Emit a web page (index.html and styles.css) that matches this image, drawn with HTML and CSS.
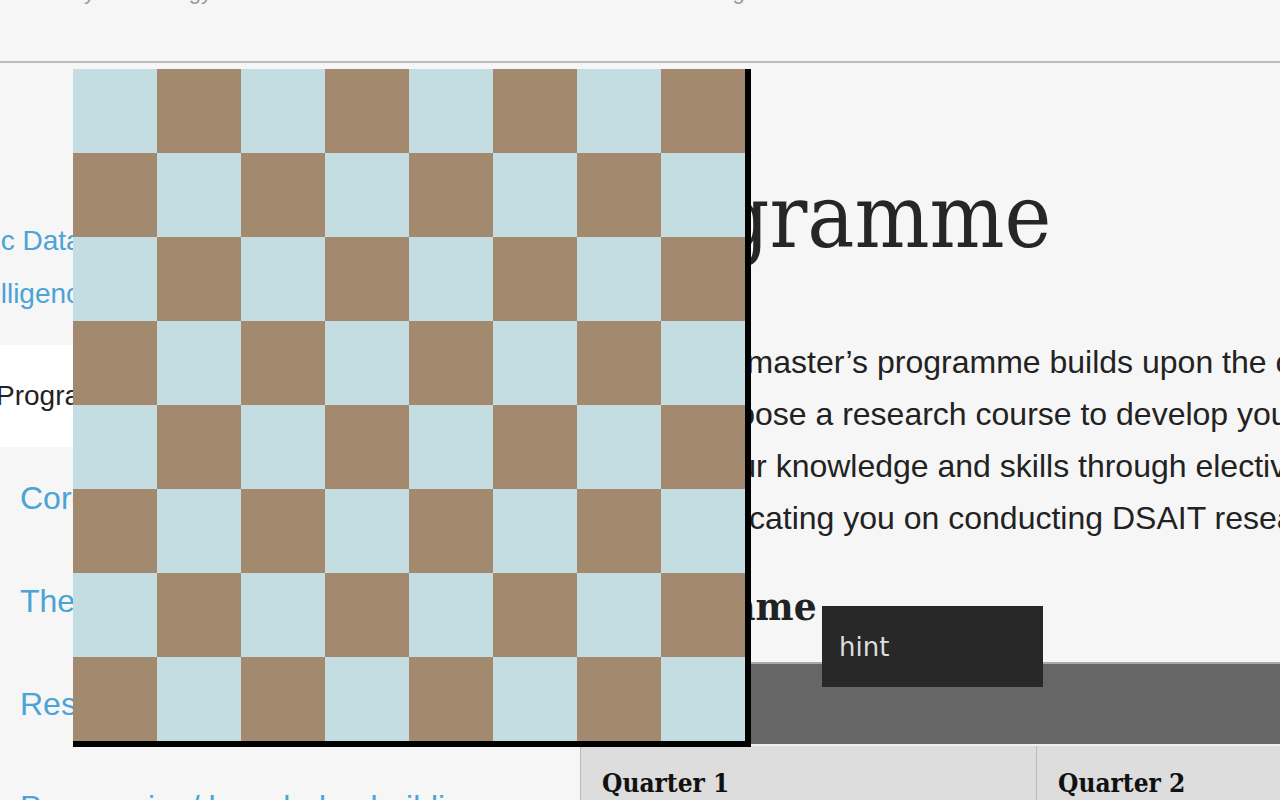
FILE: index.html
```html
<!DOCTYPE html>
<html lang="en">
<head>
<meta charset="utf-8">
<title>Programme</title>
<link rel="stylesheet" href="styles.css">
</head>
<body>
<div class="page">
  <header class="site-header">
    <p class="tagline">Faculty Technology Mathematics and Electrical Science the Built Teaching</p>
  </header>
  <div class="layout">
    <nav class="sidenav">
      <ul class="nav-list">
        <li><a class="nav-link nav-top nav-title" href="#">Civic Data Science and<br>Intelligence</a></li>
        <li><a class="nav-link nav-top is-active" href="#">Programme</a></li>
        <li><a class="nav-link nav-sub" href="#">Core courses</a></li>
        <li><a class="nav-link nav-sub" href="#">The thesis</a></li>
        <li><a class="nav-link nav-sub" href="#">Research courses</a></li>
        <li><a class="nav-link nav-sub" href="#">Progression/ knowledge building</a></li>
      </ul>
    </nav>
    <main class="content">
      <h1 class="page-title">Programme</h1>
      <p class="intro">The DSAIT master’s programme builds upon the core courses of the first year.<br>You can choose a research course to develop your own research skills.<br>Improve your knowledge and skills through electives in the second year,<br>thereby educating you on conducting DSAIT research independently.</p>
      <h2 class="section-title">Programme</h2>
      <table class="schedule">
        <colgroup><col class="col-q1"><col class="col-q2"></colgroup>
        <thead>
          <tr class="schedule-band"><th colspan="2">Year 1</th></tr>
          <tr class="schedule-quarters"><th>Quarter 1</th><th>Quarter 2</th></tr>
        </thead>
      </table>
    </main>
  </div>
  <div class="board" aria-label="chessboard"></div>
  <div class="hint">hint</div>
</div>
</body>
</html>
```

FILE: styles.css
```css
html, body {
  margin: 0;
  padding: 0;
  background: #f6f6f6;
}

.page {
  position: relative;
  width: 1280px;
  height: 800px;
  overflow: hidden;
  background: #f6f6f6;
  font-family: "Liberation Sans", Arial, sans-serif;
  color: #222;
}

.site-header {
  height: 61px;
  border-bottom: 2px solid #bbb;
  overflow: hidden;
}

.tagline {
  margin: -19px 0 0 0;
  padding-left: 24px;
  font-size: 22px;
  line-height: 22px;
  color: #999;
  white-space: nowrap;
}

.layout {
  display: grid;
  grid-template-columns: 560px 1000px;
  column-gap: 20px;
}

.sidenav {
  padding-top: 126px;
}

.nav-list {
  list-style: none;
  margin: 0;
  padding: 0;
  display: flex;
  flex-direction: column;
  gap: 1px;
}

.nav-link {
  display: block;
  padding: 25px 0;
  font-size: 28px;
  line-height: 52px;
  color: #4ba3d6;
  text-decoration: none;
  white-space: nowrap;
}

.nav-top {
  padding-left: 0;
  text-indent: -4px;
}

.nav-title {
  margin-left: -46px;
  text-indent: 0;
  line-height: 53px;
  padding-bottom: 24px;
}

.nav-sub {
  padding: 24px 0 26px 20px;
  font-size: 32px;
}

.nav-link.is-active {
  background: #fff;
  color: #222;
}

.content {
  min-width: 0;
}

.page-title {
  margin: 104px 0 0 0;
  font-family: "DejaVu Serif Condensed", "DejaVu Serif", serif;
  font-stretch: condensed;
  font-weight: normal;
  font-size: 88px;
  line-height: 100px;
  color: #262626;
  white-space: nowrap;
}

.intro {
  margin: 69px 0 0 0;
  font-size: 32px;
  line-height: 52px;
  color: #222;
  white-space: nowrap;
}

.section-title {
  margin: 38px 0 0 0;
  font-family: "DejaVu Serif Condensed", "DejaVu Serif", serif;
  font-stretch: condensed;
  font-weight: bold;
  font-size: 40px;
  line-height: 48px;
  color: #222;
  white-space: nowrap;
}

.schedule {
  margin-top: 32px;
  width: 1000px;
  table-layout: fixed;
  border-collapse: separate;
  border-spacing: 0;
  border-top: 2px solid #aaa;
}

.col-q1 {
  width: 456px;
}

.schedule-band th {
  height: 80px;
  padding: 0 0 0 21px;
  background: #666;
  color: #fff;
  text-align: left;
  font-family: "DejaVu Serif", serif;
  font-size: 22px;
  border-bottom: 2px solid #eee;
}

.schedule-quarters th {
  padding: 21px 0 20px 21px;
  background: #ddd;
  text-align: left;
  font-family: "DejaVu Serif Condensed", "DejaVu Serif", serif;
  font-stretch: condensed;
  font-weight: bold;
  font-size: 26px;
  line-height: 32px;
  color: #111;
  border-left: 1px solid #bbb;
}

.board {
  position: absolute;
  left: 73px;
  top: 69px;
  width: 672px;
  height: 672px;
  border-right: 6px solid #000;
  border-bottom: 6px solid #000;
  background: repeating-conic-gradient(#a38a6e 0 25%, #c4dde3 0 50%) 0 0 / 168px 168px;
}

.hint {
  position: absolute;
  left: 822px;
  top: 606px;
  width: 204px;
  height: 81px;
  padding-left: 17px;
  display: flex;
  align-items: center;
  background: #282828;
  color: #ddd;
  font-family: "DejaVu Sans", sans-serif;
  font-size: 26px;
}
```
